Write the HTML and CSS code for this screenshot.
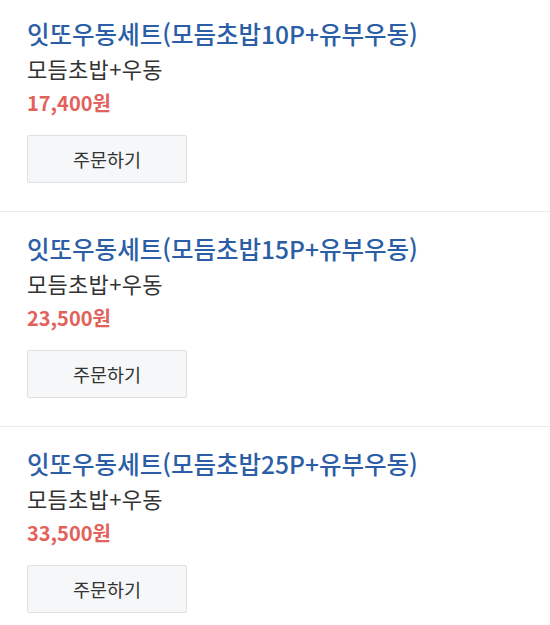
FILE: index.html
```html
<!DOCTYPE html>
<html lang="ko">

<head>
    <meta charset="UTF-8">
    <title>메뉴</title>
    <link rel="stylesheet" href="styles.css">
</head>

<body>
    <div class="menu-list">
        <div class="menu-item">
            <div class="menu-item-title">잇또우동세트(모듬초밥10P+유부우동)</div>
            <div class="menu-item-desc">모듬초밥+우동</div>
            <div class="menu-item-price">17,400원</div>
            <div class="menu-item-button">주문하기</div>
        </div>
        <div class="menu-item">
            <div class="menu-item-title">잇또우동세트(모듬초밥15P+유부우동)</div>
            <div class="menu-item-desc">모듬초밥+우동</div>
            <div class="menu-item-price">23,500원</div>
            <div class="menu-item-button">주문하기</div>
        </div>
        <div class="menu-item">
            <div class="menu-item-title">잇또우동세트(모듬초밥25P+유부우동)</div>
            <div class="menu-item-desc">모듬초밥+우동</div>
            <div class="menu-item-price">33,500원</div>
            <div class="menu-item-button">주문하기</div>
        </div>
    </div>
</body>

</html>
```

FILE: styles.css
```css
body {
    background: #FFFFFF;
    margin: 0;
    font-family: "Noto Sans CJK KR", "Noto Sans", sans-serif;
}

.menu-list {
    display: flex;
    flex-direction: column;
}

.menu-item {
    padding: 20px 27px 28px;
    border-bottom: 1px solid #EBEBEB;
}

.menu-item:first-child {
    padding-top: 17px;
}

.menu-item-title {
    font-size: 24.5px;
    line-height: 34px;
    font-weight: 500;
    color: #2B5EA6;
}

.menu-item-desc {
    font-size: 22px;
    line-height: 34px;
    letter-spacing: 0.3px;
    color: #333333;
}

.menu-item-price {
    font-size: 20px;
    line-height: 36px;
    font-weight: 700;
    color: #E2625B;
}

.menu-item-button {
    width: 158px;
    height: 46px;
    margin-top: 14px;
    border: 1px solid #E0E0E0;
    border-radius: 2px;
    background: #F6F7F9;
    text-align: center;
    line-height: 46px;
    font-size: 18.5px;
    color: #333333;
}
```
